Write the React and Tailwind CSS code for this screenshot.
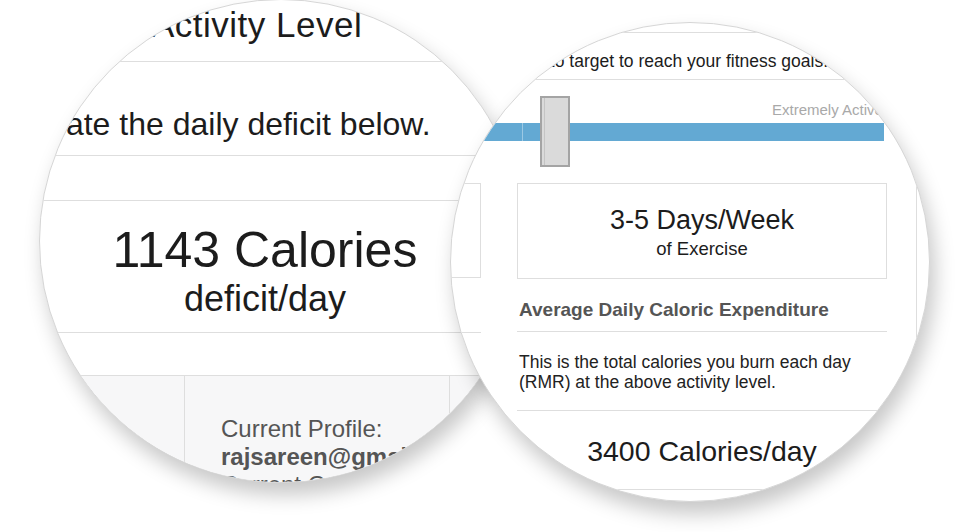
export default function App() {
  const line = "border-[#dedede]";
  return (
    <div className="relative w-[972px] h-[532px] bg-white overflow-hidden font-['Liberation_Sans',Arial,sans-serif]">
      {/* Left magnifier */}
      <div className="absolute left-[39px] top-[-1px] w-[484px] h-[484px] rounded-full overflow-hidden bg-white border border-[#d6d6d6] shadow-[5px_12px_20px_rgba(0,0,0,0.22)]">
        <div className="flex flex-col text-[#1c1c1c]">
          <div className={`h-[62px] border-b ${line} pl-[111px] pt-[7px] text-[35px] leading-none whitespace-nowrap tracking-[0.5px]`}>
            Activity Level
          </div>
          <div className={`h-[94px] border-b ${line} pt-[46px] text-[32px] leading-none whitespace-nowrap`}>
            <span className="ml-[-63px]">Calculate the daily deficit below.</span>
          </div>
          <div className={`h-[45px] border-b ${line}`} />
          <div className={`h-[132px] border-b ${line} pr-[32px] pt-[24px] text-center whitespace-nowrap`}>
            <div className="text-[50px] leading-none">1143 Calories</div>
            <div className="text-[36px] leading-none mt-[6px]">deficit/day</div>
          </div>
          <div className={`h-[43px] border-b ${line}`} />
          <div className="flex h-[200px] bg-[#f7f7f8]">
            <div className={`w-[145px] border-r ${line}`} />
            <div className={`w-[265px] border-r ${line} pl-[36px] pt-[39px] text-[24px] leading-[28px] text-[#555] whitespace-nowrap`}>
              <div>Current Profile:</div>
              <div className="font-bold">rajsareen@gmail.com</div>
              <div>Current Calorie Goal:</div>
            </div>
          </div>
        </div>
      </div>

      {/* Right magnifier */}
      <div className="absolute left-[450px] top-[22px] w-[480px] h-[480px] rounded-full overflow-hidden bg-white border border-[#d6d6d6] shadow-[5px_12px_20px_rgba(0,0,0,0.22)]">
        <div className="flex flex-col text-[#1c1c1c]">
          <div className={`h-[10px] border-b ${line}`} />
          <div className={`h-[47px] border-b ${line} pl-[58px] pt-[20px] text-[17.5px] leading-none whitespace-nowrap`}>
            level to target to reach your fitness goals.
          </div>
          <div className="relative h-[103px]">
            <div className="pl-[321px] pt-[22px] text-[15px] leading-none text-[#a9a9a9] whitespace-nowrap">
              Extremely Active
            </div>
            <div className="relative mt-[6px] h-[18px] w-[433px] bg-[#63a9d3]">
              <div className="absolute left-[71px] top-0 h-full w-[1px] bg-[#9cc9e4]" />
            </div>
            <div className="absolute left-[89px] top-[16px] w-[30px] h-[71px] border-2 border-[#a4a4a4] bg-[#dadada]">
              <div className="ml-[2px] h-full w-[1px] bg-[#c4c4c4]" />
            </div>
          </div>
          <div className="flex items-start">
            <div className="w-[30px] shrink-0">
              <div className={`h-[95px] border-t border-r border-b ${line}`} />
              <div className={`h-[55px] border-b ${line}`} />
            </div>
            <div className="ml-[36px] w-[370px] shrink-0">
              <div className={`h-[96px] border ${line} pt-[23px] text-center whitespace-nowrap`}>
                <div className="text-[27px] leading-none">3-5 Days/Week</div>
                <div className="text-[18.5px] leading-none mt-[6px]">of Exercise</div>
              </div>
              <div className={`h-[53px] border-b ${line} pl-[2px] pt-[21px] text-[19px] leading-none font-bold text-[#555] whitespace-nowrap`}>
                Average Daily Caloric Expenditure
              </div>
              <div className="h-[78px] pl-[2px] pt-[20px] text-[17.5px] leading-[20px] text-[#222]">
                This is the total calories you burn each day
                <br />
                (RMR) at the above activity level.
              </div>
              <div className={`h-[80px] border-t border-b ${line} pt-[26px] text-center text-[28.5px] leading-none whitespace-nowrap`}>
                3400 Calories/day
              </div>
            </div>
            <div className={`ml-[29px] h-[157px] border-l ${line}`} />
          </div>
        </div>
      </div>
    </div>
  );
}
